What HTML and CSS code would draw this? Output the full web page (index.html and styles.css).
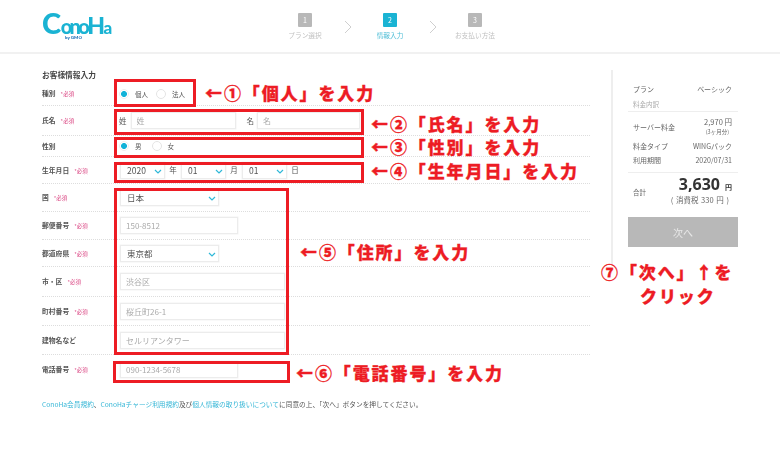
FILE: index.html
```html
<!DOCTYPE html>
<html lang="ja">
<head>
    <meta charset="UTF-8">
    <meta name="viewport" content="width=device-width, initial-scale=1.0">
    <title>ConoHa お客様情報入力</title>
    <link rel="stylesheet" href="styles.css">
</head>
<body>
    <div id="page">
        <header class="top">
            <div class="logo">
                <span class="logo_big">C</span><span class="logo_small">ono</span><span class="logo_h">H</span><span class="logo_a">a</span>
                <span class="logo_by">by GMO</span>
            </div>
            <div class="steps">
                <div class="step">
                    <span class="step_num">1</span>
                    <span class="step_name">プラン選択</span>
                </div>
                <svg class="step_arrow" viewBox="0 0 8 14"><path d="M1 1l6 6-6 6"/></svg>
                <div class="step current">
                    <span class="step_num">2</span>
                    <span class="step_name">情報入力</span>
                </div>
                <svg class="step_arrow" viewBox="0 0 8 14"><path d="M1 1l6 6-6 6"/></svg>
                <div class="step">
                    <span class="step_num">3</span>
                    <span class="step_name">お支払い方法</span>
                </div>
            </div>
        </header>

        <div class="content">
            <section class="form">
                <h2 class="form_title">お客様情報入力</h2>

                <div class="row row_kind">
                    <div class="label">種別<span class="req">*必須</span></div>
                    <div class="field">
                        <span class="radio on"></span><span class="radio_text">個人</span>
                        <span class="radio"></span><span class="radio_text">法人</span>
                    </div>
                </div>
                <div class="row row_name">
                    <div class="label">氏名<span class="req">*必須</span></div>
                    <div class="field field_name">
                        <span class="unit">姓</span><input class="input w_sei" placeholder="姓">
                        <span class="unit unit_mei">名</span><input class="input w_mei" placeholder="名">
                    </div>
                </div>
                <div class="row row_sex">
                    <div class="label">性別</div>
                    <div class="field">
                        <span class="radio on"></span><span class="radio_text">男</span>
                        <span class="radio"></span><span class="radio_text">女</span>
                    </div>
                </div>
                <div class="row row_birth">
                    <div class="label">生年月日<span class="req">*必須</span></div>
                    <div class="field">
                        <div class="select w_date">2020<svg class="chev" viewBox="0 0 8 5"><path d="M1 1l3 3 3-3"/></svg></div>
                        <span class="unit unit_date">年</span>
                        <div class="select w_date">01<svg class="chev" viewBox="0 0 8 5"><path d="M1 1l3 3 3-3"/></svg></div>
                        <span class="unit unit_date">月</span>
                        <div class="select w_date">01<svg class="chev" viewBox="0 0 8 5"><path d="M1 1l3 3 3-3"/></svg></div>
                        <span class="unit unit_date">日</span>
                    </div>
                </div>
                <div class="row row_28">
                    <div class="label">国<span class="req">*必須</span></div>
                    <div class="field">
                        <div class="select w_pref">日本<svg class="chev" viewBox="0 0 8 5"><path d="M1 1l3 3 3-3"/></svg></div>
                    </div>
                </div>
                <div class="row row_28">
                    <div class="label">郵便番号<span class="req">*必須</span></div>
                    <div class="field"><input class="input w_short" placeholder="150-8512"></div>
                </div>
                <div class="row row_27">
                    <div class="label">都道府県<span class="req">*必須</span></div>
                    <div class="field">
                        <div class="select w_pref">東京都<svg class="chev" viewBox="0 0 8 5"><path d="M1 1l3 3 3-3"/></svg></div>
                    </div>
                </div>
                <div class="row row_30">
                    <div class="label">市・区<span class="req">*必須</span></div>
                    <div class="field"><input class="input w_long" placeholder="渋谷区"></div>
                </div>
                <div class="row row_29">
                    <div class="label">町村番号<span class="req">*必須</span></div>
                    <div class="field"><input class="input w_long" placeholder="桜丘町26-1"></div>
                </div>
                <div class="row row_29">
                    <div class="label">建物名など</div>
                    <div class="field"><input class="input w_long" placeholder="セルリアンタワー"></div>
                </div>
                <div class="row row_28 row_last">
                    <div class="label">電話番号<span class="req">*必須</span></div>
                    <div class="field"><input class="input w_short" placeholder="090-1234-5678"></div>
                </div>

                <p class="agree"><a>ConoHa会員規約</a>、<a>ConoHaチャージ利用規約</a>及び<a>個人情報の取り扱いについて</a>に同意の上、「次へ」ボタンを押してください。</p>
            </section>

            <aside class="side">
                <div class="side_row side_plan"><span>プラン</span><span>ベーシック</span></div>
                <div class="side_sub">料金内訳</div>
                <div class="side_row side_fee">
                    <span>サーバー料金</span>
                    <span class="side_price">2,970 円<small>(3ヶ月分)</small></span>
                </div>
                <div class="side_row side_item"><span>料金タイプ</span><span>WINGパック</span></div>
                <div class="side_row side_item side_end"><span>利用期間</span><span>2020/07/31</span></div>
                <div class="total">
                    <span class="total_name">合計</span>
                    <div class="total_right">
                        <div class="total_num">3,630<span>円</span></div>
                        <div class="total_tax">( 消費税 330 円 )</div>
                    </div>
                </div>
                <button class="next">次へ</button>
            </aside>
        </div>

        <!-- red notes drawn over the form -->
        <div class="box box1"></div>
        <div class="box box2"></div>
        <div class="box box3"></div>
        <div class="box box4"></div>
        <div class="box box5"></div>
        <div class="box box6"></div>
        <div class="note note1">←①「個人」を入力</div>
        <div class="note note2">←②「氏名」を入力</div>
        <div class="note note3">←③「性別」を入力</div>
        <div class="note note4">←④「生年月日」を入力</div>
        <div class="note note5">←⑤「住所」を入力</div>
        <div class="note note6">←⑥「電話番号」を入力</div>
        <div class="note note7">⑦「次へ」↑を</div>
        <div class="note note8">クリック</div>
    </div>
</body>
</html>
```

FILE: styles.css
```css
*{
    box-sizing: border-box;
}

body{
    margin: 0;
    background: #fff;
    font-family: "Noto Sans CJK JP", "Noto Sans", sans-serif;
    color: #555;
}

#page{
    position: relative;
    width: 780px;
    height: 455px;
    overflow: hidden;
}

/* the reference is a slightly soft capture */
.top, .form, .side{
    filter: blur(0.3px);
}

/* header */
.top{
    display: flex;
    height: 54px;
    padding-left: 42px;
    border-bottom: 2px solid #f1f1f1;
}

.logo{
    position: relative;
    width: 70px;
    height: 38px;
    margin-top: 5px;
    color: #1ab3d3;
    font-family: "Lato", sans-serif;
    font-weight: 900;
    line-height: 36px;
    white-space: nowrap;
}

.logo_big{
    font-size: 29px;
    letter-spacing: -0.5px;
}

.logo_small{
    font-size: 20px;
    letter-spacing: -2.6px;
}

.logo_h{
    font-size: 23px;
    letter-spacing: -1.5px;
}

.logo_a{
    font-size: 17px;
}

.logo_by{
    position: absolute;
    left: 23px;
    top: 30px;
    color: #1b6fb8;
    font-size: 4.5px;
    line-height: 5px;
}

.steps{
    display: flex;
    margin-left: 163px;
    padding-top: 13px;
}

.step{
    display: flex;
    flex-direction: column;
    align-items: center;
    width: 60px;
}

.step_num{
    width: 14px;
    height: 14px;
    border-radius: 1px;
    background: #b8b8b8;
    color: #fff;
    font-size: 7px;
    line-height: 14px;
    text-align: center;
}

.step_name{
    margin-top: 3px;
    color: #c0c0c0;
    font-size: 6.7px;
    line-height: 11px;
    white-space: nowrap;
}

.current .step_num{
    background: #1ab3d3;
}

.current .step_name{
    color: #4dbdd6;
}

.step_arrow{
    width: 8px;
    height: 14px;
    margin: 7px 8px 0 9px;
    fill: none;
    stroke: #cfcfcf;
    stroke-width: 1;
}

/* form */
.content{
    display: flex;
    padding-left: 42px;
}

.form{
    width: 548px;
}

.form_title{
    margin: 14px 0 0;
    height: 14px;
    color: #444;
    font-size: 7.7px;
    font-weight: 700;
    line-height: 14px;
}

.row{
    display: flex;
    align-items: center;
    border-bottom: 1px dotted #ddd;
}

.row_kind{ height: 24px; }
.row_name{ height: 30px; }
.row_sex{ height: 21px; }
.row_birth{ height: 27px; }
.row_27{ height: 27px; }
.row_28{ height: 28px; }
.row_29{ height: 29px; }
.row_30{ height: 30px; }

.row_last{
    border-bottom: 0;
}

.label{
    width: 78px;
    color: #555;
    font-size: 6.8px;
    font-weight: 700;
    line-height: 12px;
    white-space: nowrap;
}

.req{
    margin-left: 5px;
    color: #d9407f;
    font-size: 5.5px;
    font-weight: 400;
}

.field{
    display: flex;
    align-items: center;
}

.radio{
    width: 10px;
    height: 10px;
    margin-left: -1px;
    border: 1px solid #e4e4e4;
    border-radius: 50%;
}

.radio.on{
    border-color: #eee;
    background: radial-gradient(circle, #12b2d8 0 2.7px, #fff 3.2px);
}

.radio_text{
    margin: 0 9px 0 6px;
    font-size: 6.5px;
    line-height: 12px;
}

.row_sex .radio_text{
    margin-right: 11px;
}

.unit{
    font-size: 7.5px;
    line-height: 12px;
}

.field_name .unit{
    margin: 0 4px 0 -1px;
}

.field_name .unit_mei{
    margin: 0 3px 0 11px;
}

.unit_date{
    width: 16px;
    text-align: center;
}

.input, .select{
    height: 17px;
    border: 1px solid #ececec;
    box-shadow: 0 0 0 0.5px #f3f3f3;
    background: #fff;
    font-family: inherit;
    font-size: 8px;
    line-height: 15px;
    color: #555;
}

.input{
    padding: 0 5px;
    outline: 0;
    border-radius: 0;
}

.input::placeholder{
    color: #aaa;
    opacity: 1;
}

.select{
    position: relative;
    padding-left: 6px;
    font-size: 8.5px;
}

.chev{
    position: absolute;
    right: 2px;
    top: 6px;
    width: 8px;
    height: 5px;
    fill: none;
    stroke: #2fb8d8;
    stroke-width: 1.2;
}

.w_sei{ width: 105px; }
.w_mei{ width: 103px; }
.w_date{ width: 45px; }
.w_pref{ width: 99px; }
.w_short{ width: 118px; }
.w_long{ width: 165px; }

.agree{
    margin: 15px 0 0;
    color: #555;
    font-size: 6.7px;
    line-height: 12px;
    white-space: nowrap;
}

.agree a{
    color: #35b6d6;
}

/* right panel */
.side{
    width: 129px;
    height: 196px;
    margin: 16px 0 0 21px;
    padding: 13px 0 0 15px;
    border-left: 2px solid #eee;
    font-size: 7px;
    line-height: 12px;
}

.side > *{
    width: 110px;
}

.side_row{
    display: flex;
    justify-content: space-between;
    padding: 0 6px 0 5px;
    color: #666;
}

.side_sub{
    padding: 3px 5px 1px;
    height: 17px;
    border-bottom: 1px solid #eee;
    color: #aaa;
    font-size: 6.5px;
}

.side_fee{
    align-items: center;
    padding-top: 3px;
    height: 26px;
}

.side_price{
    text-align: right;
    font-size: 7.5px;
}

.side_price small{
    display: block;
    margin-right: 3px;
    font-size: 5.5px;
    line-height: 9px;
}

.side_item{
    height: 15px;
    align-items: center;
}

.side_end{
    height: 20px;
    padding-bottom: 6px;
    border-bottom: 1px solid #eee;
}

.total{
    display: flex;
    justify-content: space-between;
    padding: 2px 6px 0 5px;
    height: 44px;
}

.total_name{
    margin-top: 11px;
    font-size: 6.5px;
    color: #666;
}

.total_num{
    color: #333;
    font-family: "Open Sans", sans-serif;
    font-size: 16px;
    font-weight: 700;
    line-height: 19px;
    text-align: right;
}

.total_num span{
    margin-left: 5px;
    font-family: "Noto Sans CJK JP", sans-serif;
    font-size: 7px;
}

.total_tax{
    margin-top: -2px;
    margin-right: 3px;
    color: #666;
    font-size: 7.5px;
    line-height: 10px;
    word-spacing: 1px;
    text-align: right;
}

.next{
    display: block;
    height: 30px;
    border: 0;
    background: #b8b8b8;
    color: #e8e8e8;
    font-family: inherit;
    font-size: 10px;
}

/* overlay notes */
.box{
    position: absolute;
    border: 3px solid #ed1c24;
}

.box1{ left: 114px; top: 79px; width: 82px; height: 28px; }
.box2{ left: 114px; top: 109px; width: 250px; height: 26px; }
.box3{ left: 114px; top: 137px; width: 250px; height: 21px; }
.box4{ left: 114px; top: 162px; width: 250px; height: 21px; }
.box5{ left: 114px; top: 188px; width: 175px; height: 167px; }
.box6{ left: 113px; top: 361px; width: 177px; height: 22px; }

.note{
    position: absolute;
    color: #ed1c24;
    font-size: 17px;
    font-weight: 900;
    letter-spacing: 1.9px;
    line-height: 22px;
    white-space: nowrap;
    -webkit-text-stroke: 0.3px #ed1c24;
}

.note1{ left: 205px; top: 82px; }
.note2{ left: 371px; top: 113px; }
.note3{ left: 371px; top: 136px; }
.note4{ left: 371px; top: 160px; }
.note5{ left: 300px; top: 241px; }
.note6{ left: 296px; top: 362px; }
.note7{ left: 601px; top: 261px; }
.note8{ left: 640px; top: 285px; }
```
